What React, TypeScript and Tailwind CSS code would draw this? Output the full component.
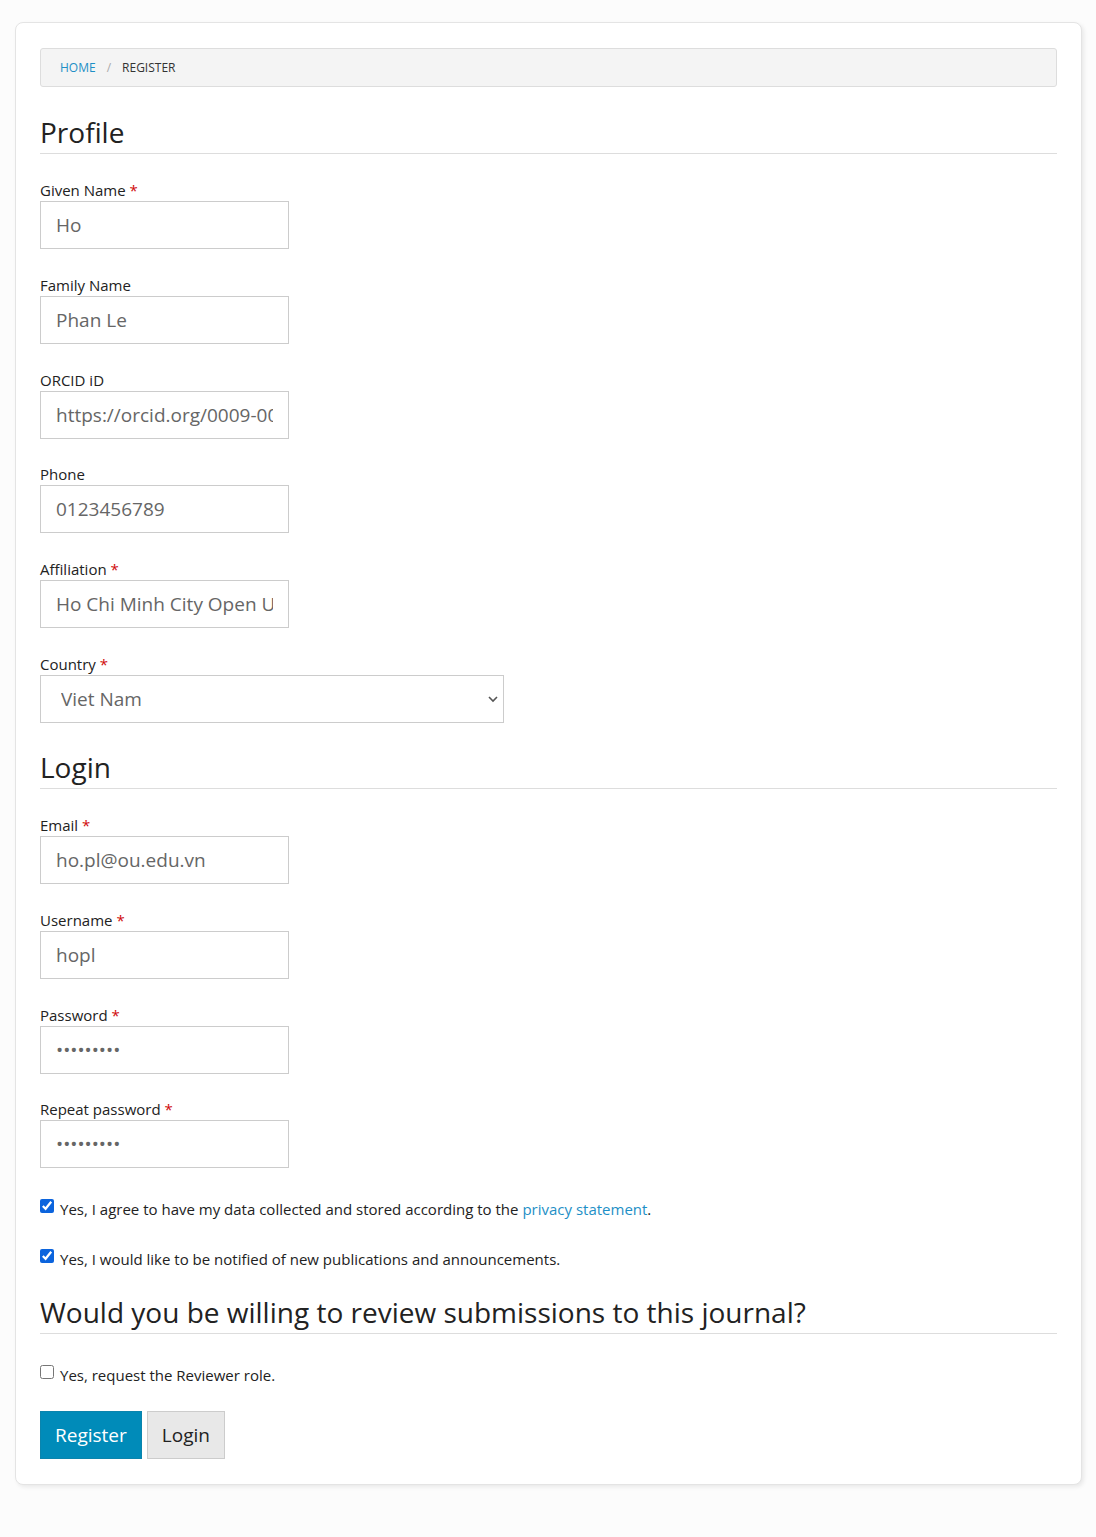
import React from 'react';

const font = { fontFamily: '"Open Sans", "Noto Sans", sans-serif' };

const Field = ({ label, value, required, type = 'text' }: { label: string; value: string; required?: boolean; type?: string }) => (
  <div className="mb-[25.8px]">
    <label className="block text-[15px] leading-[21px] text-[#222]">
      {label}
      {required && <span className="text-[#d00a0a]"> *</span>}
    </label>
    <input
      type={type}
      defaultValue={value}
      className="block w-[249px] h-[48px] border border-[#ccc] bg-white px-[15px] text-[19px] text-[#666] outline-none"
      style={font}
    />
  </div>
);

const Heading = ({ children }: { children: React.ReactNode }) => (
  <div className="border-b border-[#ddd] pb-[3px]">
    <h2 className="text-[28px] leading-[36px] text-[#222]">{children}</h2>
  </div>
);

const App = () => {
  return (
    <div className="min-h-[1537px] bg-[#fcfcfc] pt-[22px]" style={font}>
      <div className="ml-[15px] w-[1067px] rounded-lg border border-[#e4e4e4] bg-white px-[24px] pt-[25px] pb-[25px] shadow-[2px_2px_4px_rgba(0,0,0,0.08)]">
        <nav className="flex h-[39px] items-center rounded-[3px] border border-[#ddd] bg-[#f4f4f4] px-[19px] text-[12px] uppercase">
          <a className="text-[#1e8fc6]">Home</a>
          <span className="mx-[11px] text-[#aaa]">/</span>
          <span className="text-[#333]">Register</span>
        </nav>

        <div className="mt-[27px]">
          <Heading>Profile</Heading>
        </div>

        <div className="mt-[26px]">
          <Field label="Given Name" value="Ho" required />
          <Field label="Family Name" value="Phan Le" />
          <Field label="ORCID iD" value="https://orcid.org/0009-0000-0000-0000" />
          <Field label="Phone" value="0123456789" />
          <Field label="Affiliation" value="Ho Chi Minh City Open University" required />
          <div>
            <label className="block text-[15px] leading-[21px] text-[#222]">
              Country<span className="text-[#d00a0a]"> *</span>
            </label>
            <div className="relative w-[464px]">
              <select
                defaultValue="vn"
                className="block w-full h-[48px] appearance-none border border-[#ccc] bg-white pl-[20px] text-[19px] text-[#666] outline-none"
                style={font}
              >
                <option value="vn">Viet Nam</option>
              </select>
              <svg className="pointer-events-none absolute right-[5px] top-[19px]" width="12" height="10" viewBox="0 0 12 10">
                <path d="M2 3l4 4 4-4" fill="none" stroke="#555" strokeWidth="1.6" />
              </svg>
            </div>
          </div>
        </div>

        <div className="mt-[26px]">
          <Heading>Login</Heading>
        </div>

        <div className="mt-[26px]">
          <Field label="Email" value="ho.pl@ou.edu.vn" required />
          <Field label="Username" value="hopl" required />
          <Field label="Password" value="password1" required type="password" />
          <Field label="Repeat password" value="password1" required type="password" />
        </div>

        <div className="mt-[31px] text-[15px] leading-[21px] text-[#222]">
          <label className="flex items-start gap-[6px]">
            <input type="checkbox" defaultChecked className="mt-0 h-[14px] w-[14px] accent-[#0b64dd]" />
            <span>
              Yes, I agree to have my data collected and stored according to the{' '}
              <a className="text-[#1e8fc6]">privacy statement</a>.
            </span>
          </label>
          <label className="mt-[29px] flex items-start gap-[6px]">
            <input type="checkbox" defaultChecked className="mt-0 h-[14px] w-[14px] accent-[#0b64dd]" />
            <span>Yes, I would like to be notified of new publications and announcements.</span>
          </label>
        </div>

        <div className="mt-[24px]">
          <Heading>Would you be willing to review submissions to this journal?</Heading>
        </div>

        <label className="mt-[31px] flex items-start gap-[6px] text-[15px] leading-[21px] text-[#222]">
          <input type="checkbox" className="mt-0 h-[14px] w-[14px]" />
          <span>Yes, request the Reviewer role.</span>
        </label>

        <div className="mt-[25px] flex gap-[5px]">
          <button className="h-[48px] bg-[#008bb9] border border-[#0a84ad] px-[14px] text-[19px] text-white">Register</button>
          <button className="h-[48px] bg-[#e8e8e8] border border-[#ccc] px-[14px] text-[19px] text-[#222]">Login</button>
        </div>
      </div>
    </div>
  );
};

export default App;
